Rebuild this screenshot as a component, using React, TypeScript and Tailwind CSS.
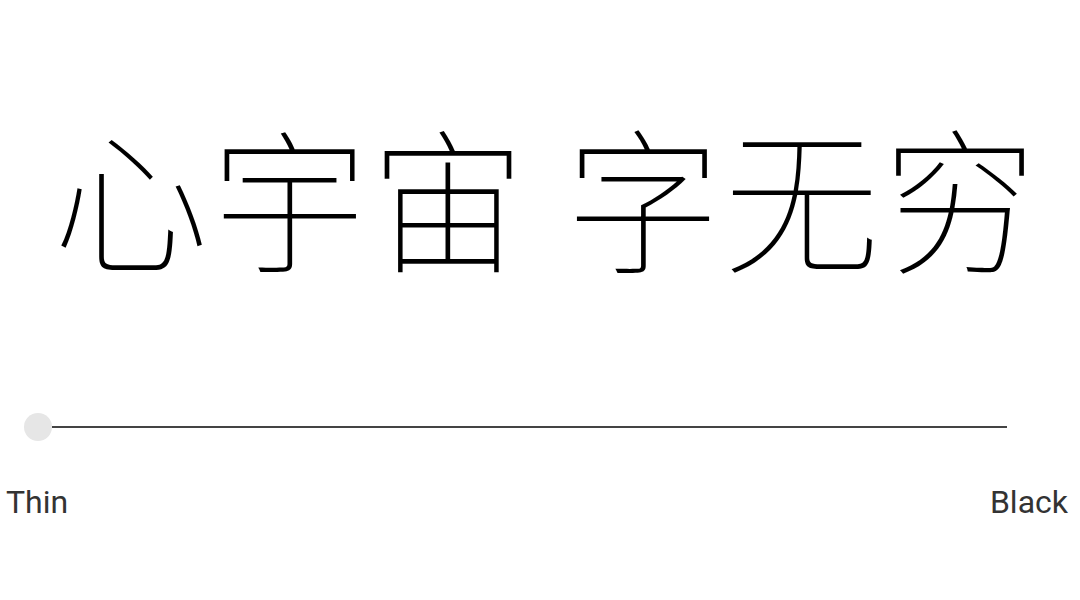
export default function App() {
  return (
    <div className="w-[1080px] h-[600px] bg-white flex flex-col overflow-hidden">
      <div
        className="h-[340px] pt-[46px] pl-[53px] flex items-center text-black text-[156px] leading-none font-thin whitespace-pre tracking-[2.5px]"
        style={{ fontFamily: '"Noto Sans CJK SC", sans-serif' }}
      >
        心宇宙 字无穷
      </div>
      <div className="relative h-[30px] mt-[72px] flex items-center">
        <div className="absolute left-[52px] right-[73px] top-[14px] h-[2px] bg-[#444]" />
        <div className="absolute left-[24px] top-[1px] w-[28px] h-[28px] rounded-full bg-[#e6e6e6]" />
      </div>
      <div
        className="flex justify-between px-[6px] mt-[44px] text-[32px] leading-none text-[#333]"
        style={{ fontFamily: 'Roboto, sans-serif' }}
      >
        <span>Thin</span>
        <span className="mr-[6px]">Black</span>
      </div>
    </div>
  );
}
